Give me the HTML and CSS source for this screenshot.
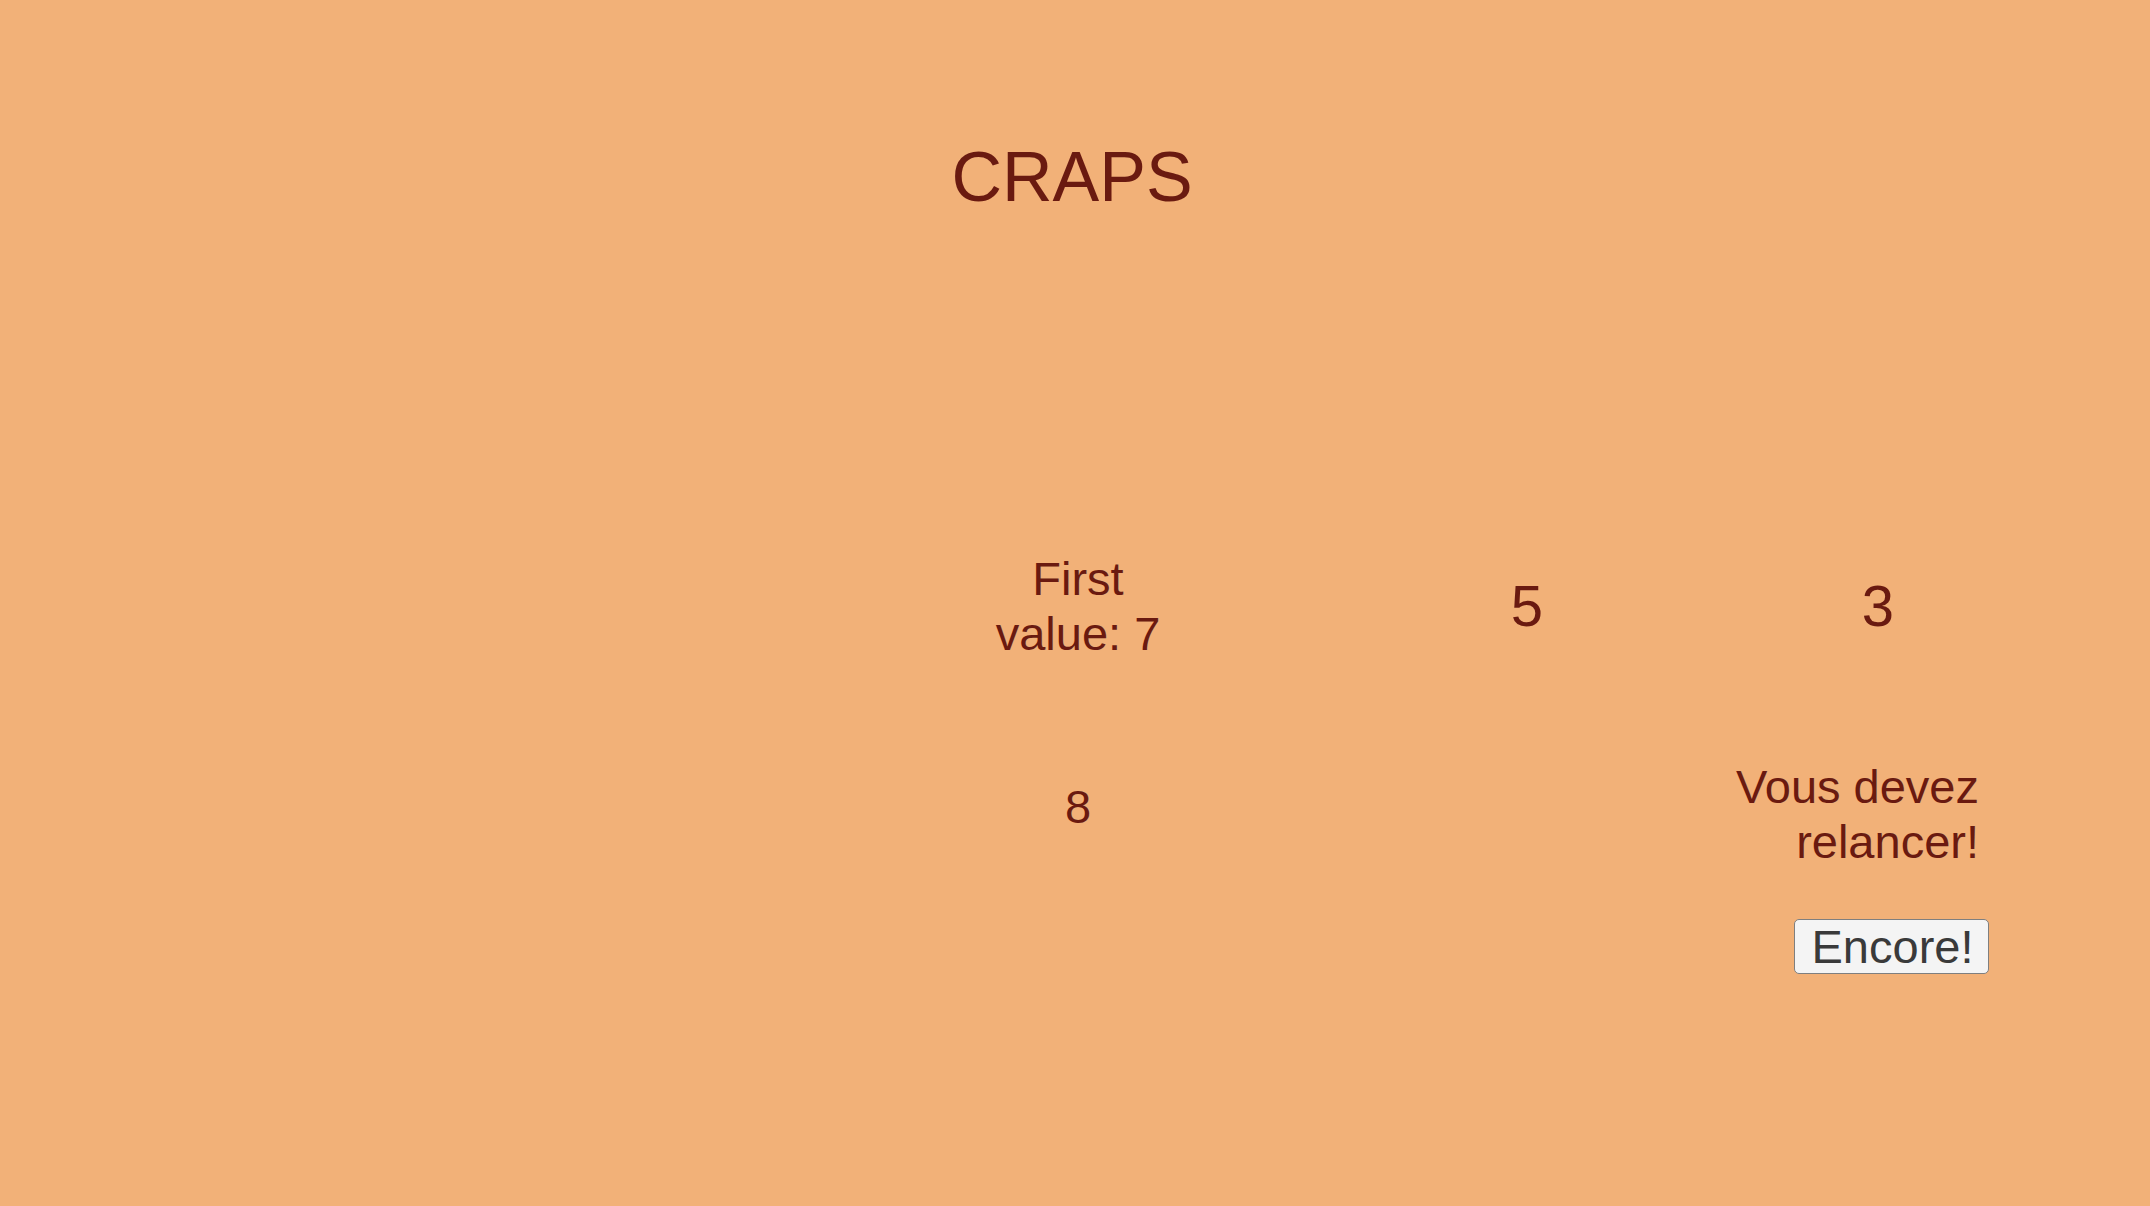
FILE: index.html
```html
<!DOCTYPE html>
<html lang="fr">
<head>
<meta charset="utf-8">
<title>CRAPS</title>
<link rel="stylesheet" href="styles.css">
</head>
<body>
<h1 class="title">CRAPS</h1>
<main class="board">
  <div class="cell first">First value: 7</div>
  <div class="cell die die-a">5</div>
  <div class="cell die die-b">3</div>
  <div class="cell sum">8</div>
  <div class="cell message">Vous devez relancer!</div>
  <div class="cell action"><button class="again" type="button">Encore!</button></div>
</main>
</body>
</html>
```

FILE: styles.css
```css
html, body {
  margin: 0;
  padding: 0;
  background: #f2b178;
  height: 100%;
}
body {
  font-family: "Liberation Sans", Arial, sans-serif;
  color: #6a1a10;
}
.title {
  margin: 137px 0 0;
  font-size: 70px;
  line-height: 80px;
  font-weight: normal;
  text-align: center;
  padding-right: 6px;
}
.board {
  margin-top: 334px;
  display: grid;
  grid-template-columns: 978px 200px 109px 480px 222px 1fr;
  grid-template-rows: 110px 98px 110px 50px 55px;
}
.cell {
  font-size: 47px;
  line-height: 55px;
}
.first {
  grid-column: 2;
  grid-row: 1;
  text-align: center;
  align-self: center;
}
.die {
  font-size: 58px;
  line-height: 66px;
  text-align: center;
  align-self: center;
}
.die-a { grid-column: 4; grid-row: 1; }
.die-b { grid-column: 5; grid-row: 1; }
.sum {
  grid-column: 2;
  grid-row: 3;
  text-align: center;
  align-self: start;
  margin-top: 20px;
}
.message {
  grid-column: 4 / 6;
  grid-row: 3;
  justify-self: end;
  width: 252px;
  text-align: right;
  padding-right: 10px;
}
.action {
  grid-column: 5;
  grid-row: 5;
  display: flex;
  justify-content: flex-end;
}
.again {
  width: 195px;
  height: 55px;
  padding: 0 0 0 2px;
  font-family: "Liberation Sans", Arial, sans-serif;
  font-size: 47px;
  line-height: 53px;
  color: #3a3a3a;
  background: #f4f4f4;
  border: 1px solid #7f7f7f;
  border-radius: 5px;
}
```
